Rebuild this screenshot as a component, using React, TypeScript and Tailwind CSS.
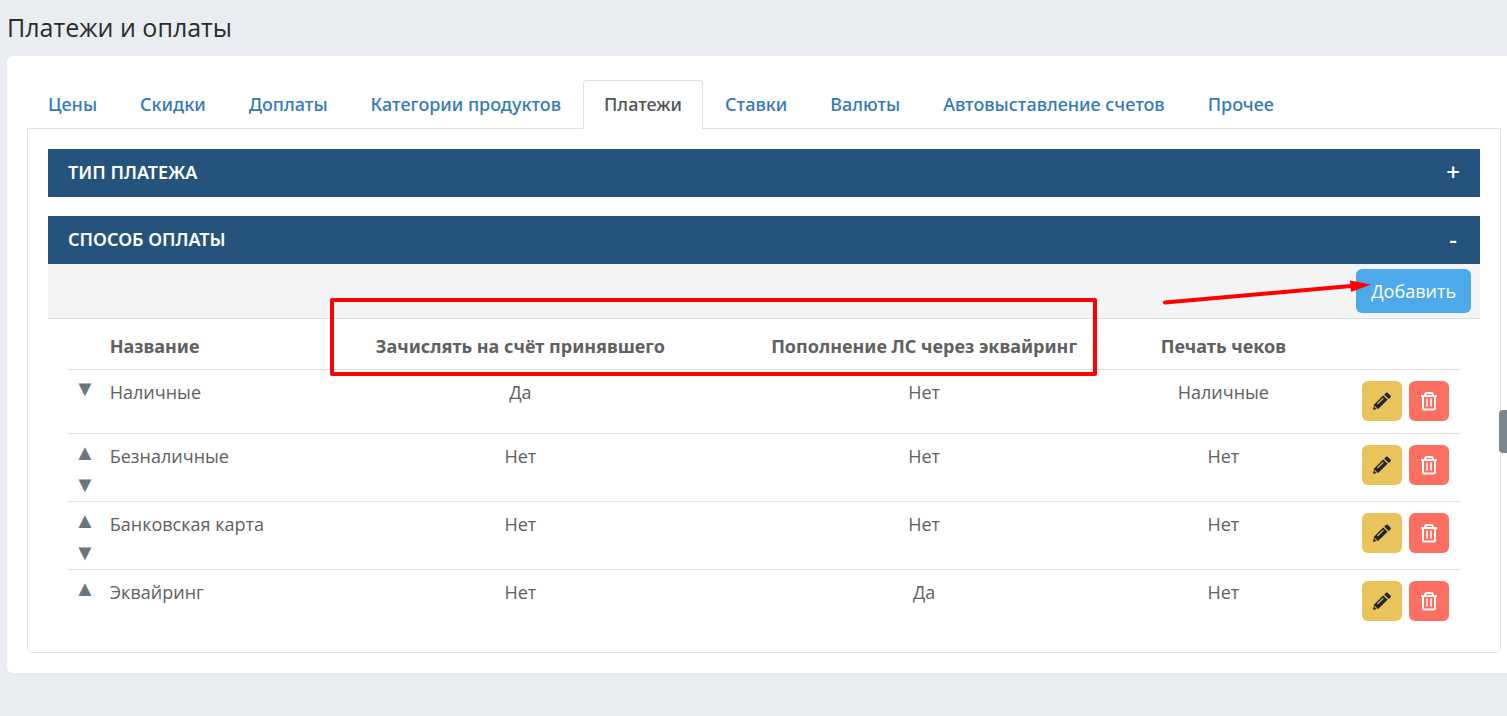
import { useState } from "react"

const tabs = [
  "Цены",
  "Скидки",
  "Доплаты",
  "Категории продуктов",
  "Платежи",
  "Ставки",
  "Валюты",
  "Автовыставление счетов",
  "Прочее",
]

const methods = [
  { id: 1, name: "Наличные", credit: "Да", acquiring: "Нет", receipt: "Наличные" },
  { id: 2, name: "Безналичные", credit: "Нет", acquiring: "Нет", receipt: "Нет" },
  { id: 3, name: "Банковская карта", credit: "Нет", acquiring: "Нет", receipt: "Нет" },
  { id: 4, name: "Эквайринг", credit: "Нет", acquiring: "Да", receipt: "Нет" },
]

function PencilIcon() {
  return (
    <svg viewBox="0 0 20 20" className="h-5 w-5" fill="currentColor" aria-hidden="true">
      <path d="M1 19l1.2-5.6L11.2 4.6l4.4 4.2L6.6 17.6z" />
      <path d="M12.2 3.6l1.6-1.6a1.6 1.6 0 0 1 2.2 0l2.4 2.4a1.6 1.6 0 0 1 0 2.2l-1.7 1.5z" />
      <path d="M5.4 13l6-5.8M2.6 15.4l2.2 2.2" stroke="#e9c35b" strokeWidth="1.1" />
    </svg>
  )
}

function TrashIcon() {
  return (
    <svg viewBox="0 0 20 20" className="h-5 w-5" fill="none" stroke="currentColor" strokeWidth="2" aria-hidden="true">
      <path d="M2 5h16M6 4.5q0-2.5 2-2.5h4q2 0 2 2.5M4 5v12.4q0 1 1 1h10q1 0 1-1V5" />
      <path d="M8 7.5v8M12 7.5v8" strokeWidth="1.6" />
    </svg>
  )
}

function SectionHeader({ title, open, onClick }: { title: string; open: boolean; onClick: () => void }) {
  return (
    <button
      type="button"
      aria-expanded={open}
      onClick={onClick}
      className="flex h-12 w-full items-center justify-between bg-[#24537c] px-5 pb-0.5 font-['Noto_Sans',sans-serif] font-semibold text-white"
    >
      <span>{title}</span>
      <span className="w-3.5 text-center text-2xl font-medium">{open ? "-" : "+"}</span>
    </button>
  )
}

export default function App() {
  const [activeTab, setActiveTab] = useState("Платежи")
  const [typeOpen, setTypeOpen] = useState(false)
  const [methodOpen, setMethodOpen] = useState(true)

  return (
    <div className="relative min-h-screen overflow-x-hidden bg-[#e9edf2] pb-10 pl-[7px] font-['Open_Sans','Noto_Sans',sans-serif] text-lg text-[#606060]">
      <h1 className="flex h-14 items-center pb-0.5 text-[25px] text-[#2b2b2b]">Платежи и оплаты</h1>

      <div className="rounded-l-md bg-white pt-6 pr-1.5 pb-5 pl-5">
        {/* Tabs */}
        <div role="tablist" className="flex gap-px font-['Noto_Sans',sans-serif]">
          {tabs.map((tab) => (
            <button
              key={tab}
              type="button"
              role="tab"
              aria-selected={tab === activeTab}
              onClick={() => setActiveTab(tab)}
              className={
                tab === activeTab
                  ? "relative -mb-px h-[49px] rounded-t border border-b-white border-[#dee2e6] bg-white px-5 pb-px font-medium text-[#4f5358]"
                  : "h-12 border-x border-transparent px-5 font-medium text-[#337ab7]"
              }
            >
              {tab}
            </button>
          ))}
        </div>

        <div className="rounded-b-md border border-[#dee2e6] p-5 pb-[19px]">
          <SectionHeader title="ТИП ПЛАТЕЖА" open={typeOpen} onClick={() => setTypeOpen(!typeOpen)} />

          <section className="relative mt-[19px]">
            <SectionHeader title="СПОСОБ ОПЛАТЫ" open={methodOpen} onClick={() => setMethodOpen(!methodOpen)} />

            {methodOpen && (
              <>
                {/* Toolbar */}
                <div className="flex h-[55px] items-center justify-end border-b border-[#dfdfdf] bg-[#f4f4f4] pr-[9px]">
                  <button type="button" className="h-11 rounded-md bg-[#4ca9ea] px-[15px] text-white">
                    Добавить
                  </button>
                </div>

                <div className="px-5">
                  <table className="w-full table-fixed">
                    <colgroup>
                      <col className="w-[3%]" />
                      <col className="w-[14%]" />
                      <col className="w-[31%]" />
                      <col className="w-[27%]" />
                      <col className="w-[16%]" />
                      <col className="w-[9%]" />
                    </colgroup>
                    <thead className="font-['Noto_Sans',sans-serif]">
                      <tr className="h-[50px] border-b border-[#dee0e2]">
                        <td />
                        <th className="pt-1 text-left">Название</th>
                        <th className="pt-1">Зачислять на счёт принявшего</th>
                        <th className="pt-1">Пополнение ЛС через эквайринг</th>
                        <th className="pt-1">Печать чеков</th>
                        <td />
                      </tr>
                    </thead>
                    <tbody>
                      {methods.map((method, index) => (
                        <tr key={method.id} className="border-b border-[#dee0e2] align-top last:border-b-0">
                          <td>
                            <div className="flex flex-col items-start pb-[3px] pl-1.5 text-[22px] text-[#6c757d]">
                              {index > 0 && (
                                <button type="button" aria-label="Выше" className="h-8">
                                  ▲
                                </button>
                              )}
                              {index < methods.length - 1 && (
                                <button type="button" aria-label="Ниже" className="h-8">
                                  ▼
                                </button>
                              )}
                            </div>
                          </td>
                          <td className="pt-2 whitespace-nowrap">{method.name}</td>
                          <td className="pt-2 text-center">{method.credit}</td>
                          <td className="pt-2 text-center">{method.acquiring}</td>
                          <td className="pt-2 text-center">{method.receipt}</td>
                          <td className="pt-[11px] pr-[11px] pb-3">
                            <div className="flex justify-end gap-[7px]">
                              <button
                                type="button"
                                aria-label="Изменить"
                                className="flex h-10 w-10 items-center justify-center rounded-md bg-[#e9c35b] text-[#212529]"
                              >
                                <PencilIcon />
                              </button>
                              <button
                                type="button"
                                aria-label="Удалить"
                                className="flex h-10 w-10 items-center justify-center rounded-md bg-[#ff6f61] text-white"
                              >
                                <TrashIcon />
                              </button>
                            </div>
                          </td>
                        </tr>
                      ))}
                    </tbody>
                  </table>
                </div>

                {/* Highlight around the two middle columns */}
                <div className="pointer-events-none absolute top-[82px] left-[282px] h-[78px] w-[767px] rounded-xs border-4 border-[#ff0000]" />

                {/* Arrow to the add button */}
                <svg
                  viewBox="0 0 212 28"
                  className="pointer-events-none absolute top-[62px] right-[108px] h-7 w-[212px]"
                  fill="#ff0000"
                  aria-hidden="true"
                >
                  <path d="M5 24.5L191 8" stroke="#ff0000" strokeWidth="4" strokeLinecap="round" />
                  <path d="M190 2.5l21 4-20 7.5z" />
                </svg>
              </>
            )}
          </section>
        </div>
      </div>

      {/* Side panel handle */}
      <button
        type="button"
        aria-label="Открыть панель"
        className="fixed top-[410px] right-0 h-[43px] w-2 rounded-l bg-[#7b868f]"
      />
    </div>
  )
}
